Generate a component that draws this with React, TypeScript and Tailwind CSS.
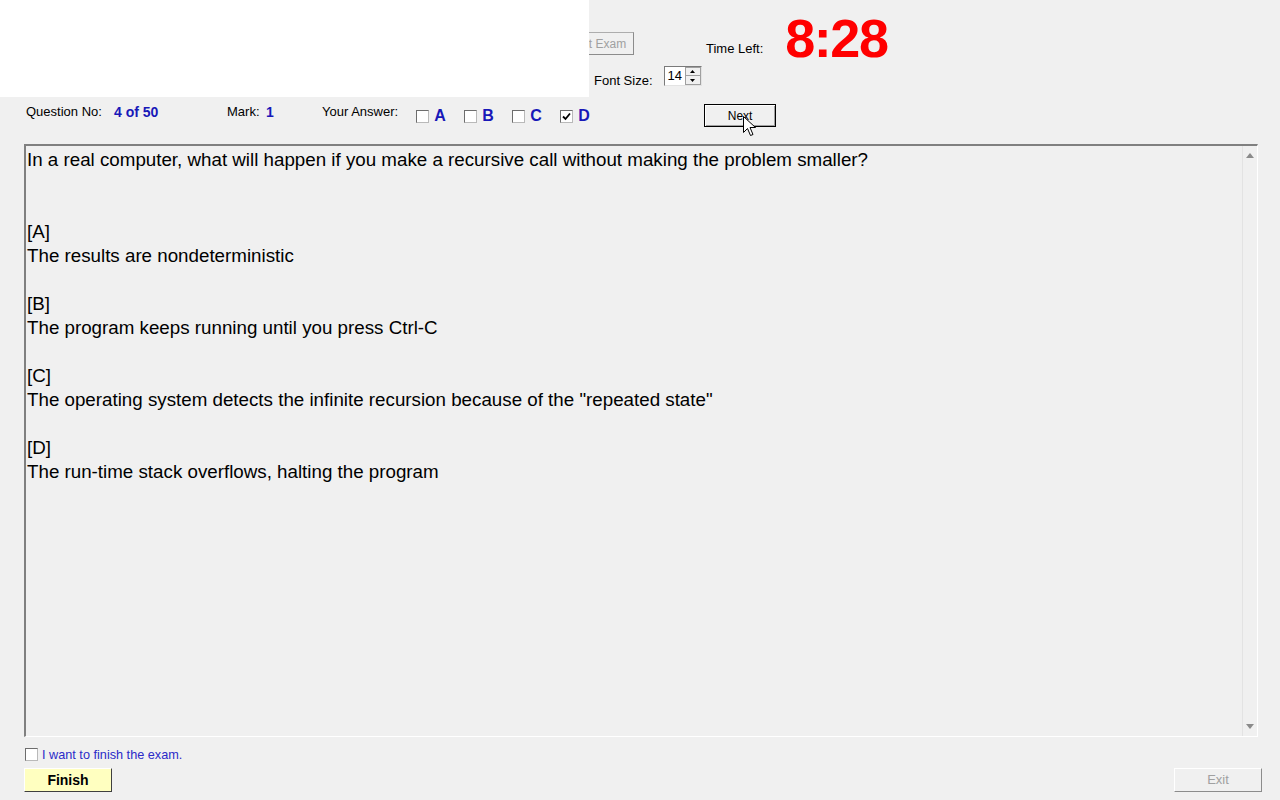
import React from "react";

const lines: string[] = [
  "In a real computer, what will happen if you make a recursive call without making the problem smaller?",
  "",
  "",
  "[A]",
  "The results are nondeterministic",
  "",
  "[B]",
  "The program keeps running until you press Ctrl-C",
  "",
  "[C]",
  'The operating system detects the infinite recursion because of the "repeated state"',
  "",
  "[D]",
  "The run-time stack overflows, halting the program",
];

function CheckBox({ checked = false }: { checked?: boolean }) {
  return (
    <span className="flex h-[13px] w-[13px] shrink-0 items-center justify-center border border-t-[#6d6d6d] border-l-[#6d6d6d] border-r-[#b9b9b9] border-b-[#b9b9b9] bg-white">
      {checked && (
        <svg width="9" height="9" viewBox="0 0 9 9">
          <path d="M1 4.5 L3.5 7 L8 1.5" fill="none" stroke="#000" strokeWidth="1.8" />
        </svg>
      )}
    </span>
  );
}

function Answer({ letter, checked }: { letter: string; checked?: boolean }) {
  return (
    <div className="flex w-[48px] items-center gap-[5px]">
      <CheckBox checked={checked} />
      <span className="text-[16px] font-bold leading-[20px] text-[#1818b8]">{letter}</span>
    </div>
  );
}

export default function App() {
  return (
    <div className="relative flex h-[800px] w-[1280px] flex-col overflow-hidden bg-[#f0f0f0] font-['Liberation_Sans',Arial,sans-serif] text-black">
      {/* top bar */}
      <div className="flex h-[97px] shrink-0 items-start">
        <div className="ml-[559px] flex w-[147px] flex-col pt-[32px]">
          <button className="h-[23px] w-[75px] border border-[#adadad] border-r-[#8c8c8c] border-b-[#8c8c8c] bg-[#f0f0f0] text-[12px] text-[#a0a0a0]">
            Start Exam
          </button>
          <div className="mt-[11px] flex items-start pl-[35px]">
            <span className="mt-[7px] text-[13px] leading-[16px]">Font Size:</span>
            <div className="ml-[11px] flex h-[20px] w-[38px] border border-t-[#7a7a7a] border-l-[#7a7a7a] border-r-[#e3e3e3] border-b-[#e3e3e3] bg-white">
              <span className="flex-1 pl-[3px] text-[13px] leading-[18px]">14</span>
              <div className="flex w-[16px] flex-col">
                <span className="flex h-[9px] items-center justify-center border border-[#a0a0a0] bg-[#f0f0f0]">
                  <svg width="5" height="3" viewBox="0 0 5 3">
                    <path d="M2.5 0 L5 3 L0 3 Z" fill="#000" />
                  </svg>
                </span>
                <span className="flex h-[9px] items-center justify-center border border-t-0 border-[#a0a0a0] bg-[#f0f0f0]">
                  <svg width="5" height="3" viewBox="0 0 5 3">
                    <path d="M0 0 L5 0 L2.5 3 Z" fill="#000" />
                  </svg>
                </span>
              </div>
            </div>
          </div>
        </div>
        <span className="mt-[41px] text-[13px] leading-[16px]">Time Left:</span>
        <span className="ml-[22px] mt-[6px] text-[54px] font-bold leading-[64px] tracking-[-1.5px] text-[#ff0000]">
          8:28
        </span>
      </div>

      {/* question info row */}
      <div className="flex h-[47px] shrink-0 items-start pt-[7px]">
        <div className="flex items-start pl-[26px] text-[13px] leading-[16px]">
          <span className="w-[88px]">Question No:</span>
          <span className="w-[113px] text-[14px] font-bold text-[#1818b8]">4 of 50</span>
          <span className="w-[39px]">Mark:</span>
          <span className="w-[56px] text-[14px] font-bold text-[#1818b8]">1</span>
          <span className="mr-[18px]">Your Answer:</span>
          <div className="mt-[2px] flex h-[20px] items-center">
            <Answer letter="A" />
            <Answer letter="B" />
            <Answer letter="C" />
            <Answer letter="D" checked />
          </div>
        </div>
        <button className="relative ml-[96px] h-[23px] w-[72px] border border-black bg-[#f0f0f0] text-[12px] shadow-[inset_1px_1px_0_#fff,inset_-1px_-1px_0_#a0a0a0]">
          Next
          <svg
            className="absolute left-[38px] top-[11px]"
            width="14"
            height="21"
            viewBox="0 0 14 21"
          >
            <path
              d="M0.5 0.5 L0.5 16.5 L4.5 12.5 L7.5 19.5 L10 18.5 L7 11.5 L12.5 11.5 Z"
              fill="#fff"
              stroke="#000"
              strokeWidth="1"
            />
          </svg>
        </button>
      </div>

      {/* question text box */}
      <div className="ml-[24px] flex h-[593px] w-[1234px] shrink-0 border-t-2 border-l-2 border-r border-b border-t-[#808080] border-l-[#808080] border-r-[#ffffff] border-b-[#ffffff] bg-[#f0f0f0]">
        <div className="flex-1 pl-[1px] pt-[2px] text-[18.75px] leading-[24px]">
          {lines.map((l, i) => (
            <div key={i} className="h-[24px] whitespace-pre">
              {l}
            </div>
          ))}
        </div>
        <div className="flex w-[15px] flex-col items-center justify-between border-l border-[#e3e3e3] bg-[#f0f0f0] py-[7px]">
          <svg width="8" height="5" viewBox="0 0 8 5">
            <path d="M4 0 L8 5 L0 5 Z" fill="#8a8a8a" />
          </svg>
          <svg width="8" height="5" viewBox="0 0 8 5">
            <path d="M0 0 L8 0 L4 5 Z" fill="#8a8a8a" />
          </svg>
        </div>
      </div>

      {/* bottom */}
      <div className="flex flex-1 items-start justify-between pl-[24px] pr-[18px] pt-[11px]">
        <div className="flex flex-col">
          <div className="flex h-[13px] items-center pl-[1px]">
            <CheckBox />
            <span className="ml-[4px] text-[12.7px] leading-[16px] text-[#2b2bc8]">I want to finish the exam.</span>
          </div>
          <button className="mt-[7px] h-[24px] w-[88px] border border-t-white border-l-white border-r-[#404040] border-b-[#404040] bg-[#ffffc0] text-[14px] font-bold">
            Finish
          </button>
        </div>
        <button className="mt-[20px] h-[24px] w-[88px] border border-t-white border-l-white border-r-[#8c8c8c] border-b-[#8c8c8c] bg-[#f0f0f0] text-[13px] text-[#a0a0a0]">
          Exit
        </button>
      </div>

      {/* white overlay window */}
      <div className="absolute left-0 top-0 h-[97px] w-[589px] bg-white" />
    </div>
  );
}
